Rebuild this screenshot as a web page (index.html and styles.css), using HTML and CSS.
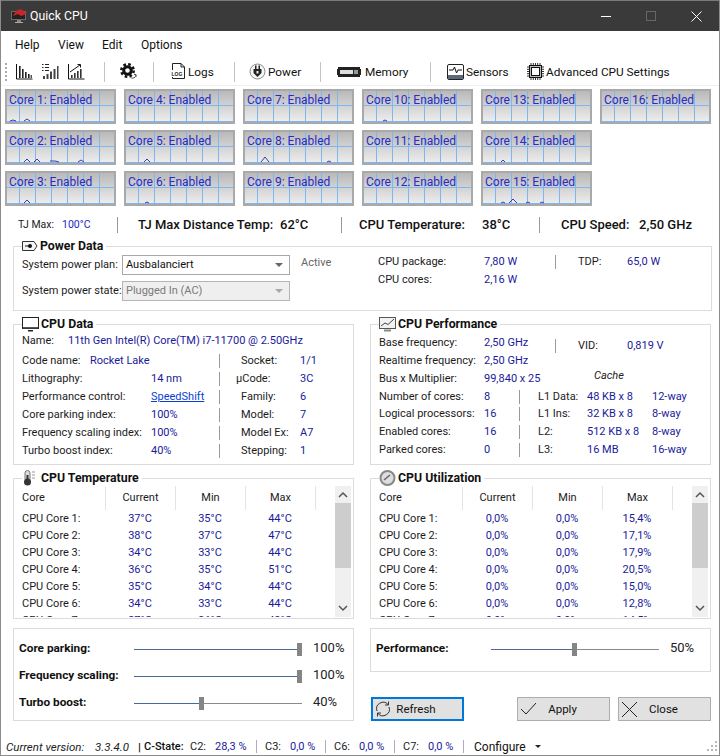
FILE: index.html
```html
<!DOCTYPE html>
<html lang="en">
<head>
<meta charset="utf-8">
<title>Quick CPU</title>
<link rel="stylesheet" href="styles.css">
</head>
<body>
<div class="window">
  <header class="titlebar">
    <svg class="logo" width="18" height="16" viewBox="0 0 18 16"><rect x="1.500" y="3.500" width="14" height="8" fill="#222" stroke="#6a6a6a"/><path d="M3 8 L6 3 L10 1 L14 3 L17 6 L11 8 L8 6 Z" fill="#c8242c"/><rect x="7" y="12" width="4" height="2" fill="#888"/><rect x="5" y="14" width="8" height="1" fill="#aaa"/></svg>
    <span class="app-name">Quick CPU</span>
    <span class="winbtns">
      <svg width="10" height="10" viewBox="0 0 10 10"><path d="M0 5.500H10" stroke="#fff"/></svg>
      <svg width="10" height="10" viewBox="0 0 10 10"><rect x=".5" y=".5" width="9" height="9" fill="none" stroke="#666"/></svg>
      <svg width="11" height="11" viewBox="0 0 11 11"><path d="M.5 .5L10.500 10.500M10.500 .5L.5 10.500" stroke="#fff"/></svg>
    </span>
  </header>

  <nav class="menu"><span>Help</span><span>View</span><span>Edit</span><span>Options</span></nav>

  <div class="toolbar">
    <span class="grip"></span>
    <svg class="ic i1" width="17" height="17" viewBox="0 0 17 17"><path d="M.5 1V16H16.500" fill="none" stroke="#111"/><path d="M3 3h1.600v12H3zM6 6h1.600v9H6zM9 9h1.600v6H9zM12 11h1.600v4H12z" fill="#222"/><path d="M14.500 12h1.500v3h-1.500z" fill="#555"/></svg>
    <svg class="ic i2" width="17" height="17" viewBox="0 0 17 17"><path d="M0 1.500h1.500M3 1.500h4M0 4.500h1.500M3 4.500h4M0 7.500h1.500M3 7.500h4" stroke="#222"/><path d="M1 13h2v3H1zM4.500 11h2v5h-2zM8 8.500h2V16H8zM11.500 6h2v10h-2zM15 3h1.500v13H15z" fill="#444"/></svg>
    <svg class="ic i3" width="17" height="17" viewBox="0 0 17 17"><path d="M.5 1V16H16.500" fill="none" stroke="#111"/><path d="M3 12h1.600v3H3zM6 10h1.600v5H6zM9 8h1.600v7H9zM12 6h1.600v9H12z" fill="#333"/><path d="M2 9L12 2M9.500 1.500h3v3" fill="none" stroke="#111"/></svg>
    <span class="tsep s1"></span>
    <svg class="ic i4" width="17" height="17" viewBox="0 0 17 17"><circle cx="7.500" cy="7.500" r="3.800" fill="none" stroke="#111" stroke-width="3"/><circle cx="7.500" cy="7.500" r="6.200" fill="none" stroke="#111" stroke-width="2.500" stroke-dasharray="2.600 2.260"/><path d="M10.500 14.500a3.500 3.500 0 0 0 5.500-2.500M16 14v-2.500h-2" fill="none" stroke="#555"/></svg>
    <span class="tsep s2"></span>
    <svg class="ic i5" width="17" height="17" viewBox="0 0 17 17"><path d="M2.500 7V.5H11L14.500 4V15.500H2.500V14" fill="none" stroke="#222"/><path d="M11 .5V4H14.500" fill="none" stroke="#222"/><text x="1.500" y="13" class="logtext">LOG</text></svg>
    <span class="tl t-logs">Logs</span>
    <span class="tsep s3"></span>
    <svg class="ic i6" width="17" height="17" viewBox="0 0 17 17"><circle cx="8.500" cy="8.500" r="7.500" fill="#f6f6f6" stroke="#888"/><path d="M6 2.500h1.500V6h2V2.500H11V6h1.500v4L8.500 14 4.500 10V6H6z" fill="#222"/><rect x="7.500" y="8" width="2" height="2.500" fill="#eee"/></svg>
    <span class="tl t-power">Power</span>
    <span class="tsep s4"></span>
    <svg class="ic i7" width="24" height="10" viewBox="0 0 24 10"><path d="M0 2h1V0h22v2h1v6h-1v2H1V8H0z" fill="#222"/><rect x="3" y="3" width="13" height="4" fill="#ddd"/><rect x="17" y="3" width="4" height="4" fill="#999"/></svg>
    <span class="tl t-mem">Memory</span>
    <span class="tsep s5"></span>
    <svg class="ic i8" width="17" height="16" viewBox="0 0 17 16"><rect x=".5" y=".5" width="16" height="15" rx="1.500" fill="#fff" stroke="#222"/><rect x="1" y="11" width="15" height="4" fill="#5a6a78"/><path d="M2 6H6L7.500 3 9.500 9 11 6H15" fill="none" stroke="#111"/></svg>
    <span class="tl t-sens">Sensors</span>
    <svg class="ic i9" width="17" height="17" viewBox="0 0 17 17"><rect x="2.500" y="2.500" width="12" height="12" fill="#bbb" stroke="#111"/><rect x="4.500" y="4.500" width="8" height="8" fill="#fff" stroke="#111"/><path d="M4 0v2M6.300 0v2M8.500 0v2M10.700 0v2M13 0v2M4 15v2M6.300 15v2M8.500 15v2M10.700 15v2M13 15v2M0 4h2M0 6.300h2M0 8.500h2M0 10.700h2M0 13h2M15 4h2M15 6.300h2M15 8.500h2M15 10.700h2M15 13h2" stroke="#333"/></svg>
    <span class="tl t-adv">Advanced CPU Settings</span>
  </div>

  <section class="cores">
    <div class="tile"><span>Core 1: Enabled</span><svg class="spark" viewBox="0 0 107 31"><path d="M3 30L6 29L9 30M17 30L20 28L23 30"/></svg></div>
    <div class="tile"><span>Core 2: Enabled</span><svg class="spark" viewBox="0 0 107 31"><path d="M17 30L20 27L23 30M27 30L30 27L33 30M43 29H48L52 30M71 30L74 28L77 30"/></svg></div>
    <div class="tile"><span>Core 3: Enabled</span><svg class="spark" viewBox="0 0 107 31"><path d="M17 30L20 27L23 30"/></svg></div>
    <div class="tile"><span>Core 4: Enabled</span><svg class="spark" viewBox="0 0 107 31"></svg></div>
    <div class="tile"><span>Core 5: Enabled</span><svg class="spark" viewBox="0 0 107 31"><path d="M18 30L21 27L24 30"/></svg></div>
    <div class="tile"><span>Core 6: Enabled</span><svg class="spark" viewBox="0 0 107 31"><path d="M19 30L21 29L23 30"/></svg></div>
    <div class="tile"><span>Core 7: Enabled</span><svg class="spark" viewBox="0 0 107 31"></svg></div>
    <div class="tile"><span>Core 8: Enabled</span><svg class="spark" viewBox="0 0 107 31"><path d="M16 30L20 25L24 30M82 30L84 29L86 30"/></svg></div>
    <div class="tile"><span>Core 9: Enabled</span><svg class="spark" viewBox="0 0 107 31"></svg></div>
    <div class="tile"><span>Core 10: Enabled</span><svg class="spark" viewBox="0 0 107 31"><path d="M19 30L21 29L23 30"/></svg></div>
    <div class="tile"><span>Core 11: Enabled</span><svg class="spark" viewBox="0 0 107 31"></svg></div>
    <div class="tile"><span>Core 12: Enabled</span><svg class="spark" viewBox="0 0 107 31"></svg></div>
    <div class="tile"><span>Core 13: Enabled</span><svg class="spark" viewBox="0 0 107 31"></svg></div>
    <div class="tile"><span>Core 14: Enabled</span><svg class="spark" viewBox="0 0 107 31"><path d="M18 30L20 28L22 30"/></svg></div>
    <div class="tile"><span>Core 15: Enabled</span><svg class="spark" viewBox="0 0 107 31"><path d="M18 30L20 29L22 30M26 30L30 26L34 30M43 30L45 29L47 30M57 30L59 29L61 30"/></svg></div>
    <div class="tile c16"><span>Core 16: Enabled</span><svg class="spark" viewBox="0 0 107 31"></svg></div>
  </section>

  <section class="summary">
    <span class="sm-l">TJ Max:</span><span class="sm-v">100°C</span><span class="bsep b1"></span>
    <b class="w1">TJ Max Distance Temp:</b><b class="w2">62°C</b><span class="bsep b2"></span>
    <b class="w3">CPU Temperature:</b><b class="w4">38°C</b><span class="bsep b3"></span>
    <b class="w5">CPU Speed:</b><b>2,50 GHz</b>
  </section>

  <section class="box power">
    <h2 class="legend"><svg width="16" height="12" viewBox="0 0 16 12"><path d="M.5 1.500H12L15 6 12 10.500H.5z" fill="#f4f4f4" stroke="#333"/><circle cx="8" cy="6" r="2" fill="#111"/><path d="M3 6h5" stroke="#111"/></svg>Power Data</h2>
    <div class="pw-left">
      <div class="pw-row"><span class="pw-lab">System power plan:</span><span class="select"><span>Ausbalanciert</span><i class="caret"></i></span><span class="active">Active</span></div>
      <div class="pw-row r2"><span class="pw-lab">System power state:</span><span class="select off"><span>Plugged In (AC)</span><i class="caret"></i></span></div>
    </div>
    <div class="pw-right">
      <div class="pw-data"><span class="lb">CPU package:</span><span class="val">7,80 W</span><span class="vsep"></span><span class="lb">TDP:</span><span class="val">65,0 W</span></div>
      <div class="pw-data"><span class="lb">CPU cores:</span><span class="val">2,16 W</span></div>
    </div>
  </section>

  <section class="two info">
    <div class="box cpu-data">
      <h2 class="legend"><svg width="17" height="15" viewBox="0 0 17 15"><rect x=".5" y=".5" width="16" height="11" fill="#fff" stroke="#222"/><rect x="1" y="10" width="15" height="1.500" fill="#555"/><path d="M6 13h5v1.500H6z" fill="#222"/></svg>CPU Data</h2>
      <div class="dl name-row"><span class="lb">Name:</span><span class="val">11th Gen Intel(R) Core(TM) i7-11700 @ 2.50GHz</span></div>
      <div class="dgrid">
        <div class="span2 code"><span class="lb">Code name:</span><span class="val">Rocket Lake</span></div><span class="vsep"></span><span class="lb">Socket:</span><span class="val">1/1</span>
        <span class="lb">Lithography:</span><span class="val">14 nm</span><span class="vsep"></span><span class="lb shift">µCode:</span><span class="val">3C</span>
        <span class="lb">Performance control:</span><a class="val link">SpeedShift</a><span class="vsep"></span><span class="lb">Family:</span><span class="val">6</span>
        <span class="lb">Core parking index:</span><span class="val">100%</span><span class="vsep"></span><span class="lb">Model:</span><span class="val">7</span>
        <span class="lb">Frequency scaling index:</span><span class="val">100%</span><span class="vsep"></span><span class="lb">Model Ex:</span><span class="val">A7</span>
        <span class="lb">Turbo boost index:</span><span class="val">40%</span><span class="vsep"></span><span class="lb">Stepping:</span><span class="val">1</span>
      </div>
    </div>
    <div class="box cpu-perf">
      <h2 class="legend"><svg width="17" height="15" viewBox="0 0 17 15"><rect x=".5" y=".5" width="16" height="11" fill="#f2f2f2" stroke="#555"/><path d="M2 9L6 6 9 7.500 15 2" fill="none" stroke="#444"/><path d="M5 12.500h7v2H5z" fill="#888"/></svg>CPU Performance</h2>
      <div class="pf-top">
        <div class="pf-left">
          <div class="pf-line"><span class="lb">Base frequency:</span><span class="val">2,50 GHz</span></div>
          <div class="pf-line"><span class="lb">Realtime frequency:</span><span class="val">2,50 GHz</span></div>
          <div class="pf-line"><span class="lb">Bus x Multiplier:</span><span class="val">99,840 x 25</span></div>
        </div>
        <div class="pf-right">
          <div class="pw-data vid"><span class="vsep"></span><span class="lb">VID:</span><span class="val">0,819 V</span></div>
          <em class="cache">Cache</em>
        </div>
      </div>
      <div class="cgrid">
        <span class="lb">Number of cores:</span><span class="val">8</span><span class="vsep"></span><span class="lb">L1 Data:</span><span class="val">48 KB x 8</span><span class="val">12-way</span>
        <span class="lb">Logical processors:</span><span class="val">16</span><span class="vsep"></span><span class="lb">L1 Ins:</span><span class="val">32 KB x 8</span><span class="val">8-way</span>
        <span class="lb">Enabled cores:</span><span class="val">16</span><span class="vsep"></span><span class="lb">L2:</span><span class="val">512 KB x 8</span><span class="val">8-way</span>
        <span class="lb">Parked cores:</span><span class="val">0</span><span class="vsep"></span><span class="lb">L3:</span><span class="val">16 MB</span><span class="val">16-way</span>
      </div>
    </div>
  </section>

  <section class="two lists">
    <div class="box listbox">
      <h2 class="legend"><svg width="17" height="16" viewBox="0 0 17 16"><rect x="3" y="0.500" width="5" height="11" rx="2.500" fill="#ddd" stroke="#777"/><circle cx="5.500" cy="12" r="3.500" fill="#333"/><rect x="4.500" y="5" width="2" height="6" fill="#333"/><path d="M10 2h3M10 5h3M10 8h3" stroke="#999"/></svg>CPU Temperature</h2>
      <div class="list">
        <div class="table">
          <div class="thead"><span>Core</span><span>Current</span><span>Min</span><span>Max</span><span></span></div>
          <div class="tr"><span class="lb">CPU Core 1:</span><span>37°C</span><span>35°C</span><span>44°C</span></div>
          <div class="tr"><span class="lb">CPU Core 2:</span><span>38°C</span><span>37°C</span><span>47°C</span></div>
          <div class="tr"><span class="lb">CPU Core 3:</span><span>34°C</span><span>33°C</span><span>44°C</span></div>
          <div class="tr"><span class="lb">CPU Core 4:</span><span>36°C</span><span>35°C</span><span>51°C</span></div>
          <div class="tr"><span class="lb">CPU Core 5:</span><span>35°C</span><span>34°C</span><span>44°C</span></div>
          <div class="tr"><span class="lb">CPU Core 6:</span><span>34°C</span><span>33°C</span><span>44°C</span></div>
          <div class="tr"><span class="lb">CPU Core 7:</span><span>37°C</span><span>36°C</span><span>48°C</span></div>
        </div>
        <div class="scroll"><svg width="16" height="17" viewBox="0 0 16 17"><path d="M4 11L8 7 12 11" fill="none" stroke="#555" stroke-width="1.500"/></svg><i class="thumb"></i><svg class="down" width="16" height="17" viewBox="0 0 16 17"><path d="M4 6L8 10 12 6" fill="none" stroke="#555" stroke-width="1.500"/></svg></div>
      </div>
    </div>
    <div class="box listbox">
      <h2 class="legend"><svg width="17" height="16" viewBox="0 0 17 16"><circle cx="8.500" cy="8" r="7" fill="#ddd" stroke="#888" stroke-width="2"/><path d="M5 10L11 5" stroke="#666" stroke-width="1.500"/></svg>CPU Utilization</h2>
      <div class="list">
        <div class="table">
          <div class="thead"><span>Core</span><span>Current</span><span>Min</span><span>Max</span><span></span></div>
          <div class="tr"><span class="lb">CPU Core 1:</span><span>0,0%</span><span>0,0%</span><span>15,4%</span></div>
          <div class="tr"><span class="lb">CPU Core 2:</span><span>0,0%</span><span>0,0%</span><span>17,1%</span></div>
          <div class="tr"><span class="lb">CPU Core 3:</span><span>0,0%</span><span>0,0%</span><span>17,9%</span></div>
          <div class="tr"><span class="lb">CPU Core 4:</span><span>0,0%</span><span>0,0%</span><span>20,5%</span></div>
          <div class="tr"><span class="lb">CPU Core 5:</span><span>0,0%</span><span>0,0%</span><span>15,0%</span></div>
          <div class="tr"><span class="lb">CPU Core 6:</span><span>0,0%</span><span>0,0%</span><span>12,8%</span></div>
          <div class="tr"><span class="lb">CPU Core 7:</span><span>0,0%</span><span>0,0%</span><span>14,5%</span></div>
        </div>
        <div class="scroll"><svg width="16" height="17" viewBox="0 0 16 17"><path d="M4 11L8 7 12 11" fill="none" stroke="#555" stroke-width="1.500"/></svg><i class="thumb"></i><svg class="down" width="16" height="17" viewBox="0 0 16 17"><path d="M4 6L8 10 12 6" fill="none" stroke="#555" stroke-width="1.500"/></svg></div>
      </div>
    </div>
  </section>

  <section class="two controls">
    <div class="box sliders">
      <div class="sl"><b>Core parking:</b><span class="track"><i class="fill" style="width:163px"></i><i class="knob"></i><i class="rest"></i></span><span class="pct">100%</span></div>
      <div class="sl"><b>Frequency scaling:</b><span class="track"><i class="fill" style="width:163px"></i><i class="knob"></i><i class="rest"></i></span><span class="pct">100%</span></div>
      <div class="sl"><b>Turbo boost:</b><span class="track"><i class="fill" style="width:65px"></i><i class="knob"></i><i class="rest"></i></span><span class="pct">40%</span></div>
    </div>
    <div class="right-controls">
      <div class="box perf-box">
        <div class="sl"><b>Performance:</b><span class="track"><i class="fill" style="width:81px"></i><i class="knob"></i><i class="rest"></i></span><span class="pct">50%</span></div>
      </div>
      <div class="buttons">
        <button class="btn focus"><svg width="16" height="16" viewBox="0 0 16 16"><path d="M2 10A6.500 6.500 0 0 1 13 3.500M14 6A6.500 6.500 0 0 1 3 12.500" fill="none" stroke="#333"/><path d="M13.500 .5V4H10M2.500 15.500V12H6" fill="none" stroke="#333"/></svg><span>Refresh</span></button>
        <button class="btn apply"><svg width="17" height="14" viewBox="0 0 17 14"><path d="M1 7L6 12 16 1" fill="none" stroke="#222"/></svg><span>Apply</span></button>
        <button class="btn close"><svg width="17" height="17" viewBox="0 0 17 17"><path d="M1 1L16 16M16 1L1 16" fill="none" stroke="#222"/></svg><span>Close</span></button>
      </div>
    </div>
  </section>

  <footer class="status">
    <em class="st-a">Current version:</em><em class="st-b">3.3.4.0</em><b class="st-c">|</b><b class="st-d">C-State:</b>
    <span class="st-l">C2:</span><span class="st-v wide">28,3 %</span><i class="st-s"></i>
    <span class="st-l">C3:</span><span class="st-v">0,0 %</span><i class="st-s"></i>
    <span class="st-l">C6:</span><span class="st-v">0,0 %</span><i class="st-s"></i>
    <span class="st-l">C7:</span><span class="st-v">0,0 %</span><i class="st-s"></i>
    <span class="st-cfg">Configure</span><i class="st-caret"></i>
    <svg class="rgrip" width="11" height="11" viewBox="0 0 11 11"><path d="M8 0h2v2H8zM4 4h2v2H4zM8 4h2v2H8zM0 8h2v2H0zM4 8h2v2H4zM8 8h2v2H8z" fill="#b8b8b8"/></svg>
  </footer>
</div>
</body>
</html>
```
FILE: styles.css
```css
* { box-sizing: border-box; }
html, body { margin: 0; padding: 0; background: #fff; }
body { font: 11px/16px Roboto, "Liberation Sans", sans-serif; color: #111; overflow: hidden; }
.window { width: 720px; height: 756px; border: 1px solid #8c8c8c; border-top: 0; overflow: hidden; background: #fff; }
i { display: block; font-style: normal; }
svg { display: block; flex: none; }

.titlebar { height: 31px; background: #3a3a3a; border-top: 1px solid #7a7a7a; color: #fff; display: flex; align-items: center; padding-left: 9px; font-size: 12.300px; }
.app-name { margin-left: 2px; }
.winbtns { margin-left: auto; display: flex; align-items: center; gap: 35px; padding-right: 17px; }

.menu { height: 27px; display: flex; align-items: center; padding-left: 14px; font-size: 12px; }
.menu span:nth-child(1) { width: 43px; }
.menu span:nth-child(2) { width: 44px; }
.menu span:nth-child(3) { width: 39px; }

.toolbar { height: 28px; display: flex; align-items: center; border-bottom: 1px solid #f0f0f0; font-size: 11.800px; }
.grip { width: 2px; height: 18px; margin-left: 4px; background: repeating-linear-gradient(#aaa 0 2px, transparent 2px 4px); }
.i1, .i2, .i3 { margin-left: 9px; }
.tsep { width: 1px; height: 20px; background: #c4c4c4; }
.s1 { margin-left: 19px; }
.i4 { margin-left: 15px; }
.s2 { margin-left: 16px; }
.i5 { margin-left: 16px; }
.logtext { font: bold 5px "Liberation Sans", sans-serif; fill: #222; }
.t-logs { margin-left: 1px; width: 46px; }
.i6 { margin-left: 14px; }
.t-power { margin-left: 2px; width: 52px; }
.i7 { margin-left: 16px; }
.t-mem { margin-left: 4px; width: 65px; }
.i8 { margin-left: 16px; }
.t-sens { margin-left: 2px; width: 61px; }
.t-adv { margin-left: 2px; }

.cores { display: grid; grid-template-rows: repeat(3, 35px); grid-auto-flow: column; grid-auto-columns: 111px; column-gap: 8px; row-gap: 6px; margin: 3px 0 0 4px; font-size: 12px; }
.tile { position: relative; border: 2px solid #a9a9a9; color: #2a2ac4; padding: 1px 0 0 2px; line-height: 16px;
  background:
    linear-gradient(90deg, #7db6f0 1px, transparent 1px) 12px 0 / 16px 100%,
    linear-gradient(#7db6f0 1px, transparent 1px) 0 14px / 100% 16px,
    linear-gradient(#b9b9b9, #eeeeee);
  background-clip: padding-box; }
.spark { position: absolute; left: 0; top: 0; width: 107px; height: 31px; }
.spark path { fill: none; stroke: #3a3ab8; stroke-width: 1; }
.c16 { grid-row: 1; }

.summary { display: flex; align-items: center; height: 16px; margin-top: 11px; padding-left: 17px; }
.summary b { font-weight: 500; font-size: 13px; }
.sm-l { font-size: 10.500px; width: 44px; color: #222; }
.sm-v { font-size: 10.500px; width: 55px; color: #2424c8; }
.bsep { width: 1px; height: 16px; background: #999; }
.b1 { margin-right: 20px; }
.w1 { width: 142px; } .w2 { width: 61px; }
.b2 { margin-right: 17px; }
.w3 { width: 123px; } .w4 { width: 57px; }
.b3 { margin-right: 21px; }
.w5 { width: 78px; }

.box { border: 1px solid #dcdcdc; position: relative; background: #fff; }
.legend { position: absolute; left: 8px; top: -10px; margin: 0; height: 18px; padding-right: 3px; background: #fff; display: flex; align-items: center; gap: 2px; font-size: 12.300px; font-weight: 700; color: #111; }
.lb { color: #1c1c1c; white-space: nowrap; }
.val { color: #1a1a9a; white-space: nowrap; }
.vsep { width: 1px; height: 14px; background: #999; align-self: center; }

.power { margin: 13px 0 0 12px; width: 699px; height: 65px; display: flex; }
.pw-left { width: 364px; padding: 8px 0 0 8px; }
.pw-row { display: flex; align-items: center; height: 20px; }
.r2 { margin-top: 6px; }
.pw-lab { width: 100px; color: #1c1c1c; white-space: nowrap; }
.select { width: 168px; height: 20px; border: 1px solid #a8a8a8; display: flex; align-items: center; justify-content: space-between; padding: 0 6px 0 3px; background: #fff; }
.select.off { background: #efefef; color: #7a7a7a; border-color: #b4b4b4; }
.caret { width: 0; height: 0; border: 4px solid transparent; border-top-color: #666; border-bottom: 0; }
.select.off .caret { border-top-color: #a8a8a8; }
.active { margin: -4px 0 0 11px; color: #666; }
.pw-right { padding-top: 6px; }
.pw-data { display: flex; align-items: center; height: 18px; }
.pw-data .lb:first-child { width: 106px; }
.pw-data .val:nth-child(2) { width: 71px; }
.pw-data .vsep + .lb { margin-left: 22px; width: 49px; }

.two { display: grid; grid-template-columns: 341px 341px; column-gap: 16px; margin-left: 12px; }
.info { margin-top: 13px; }
.info .box { height: 141px; padding: 7px 0 0 8px; }
.info .cpu-perf { padding-top: 9px; }
.dl { display: flex; height: 18px; align-items: center; }
.name-row .lb { width: 46px; }
.dgrid { display: grid; grid-template-columns: 129px 68px 22px 59px 50px; grid-auto-rows: 18px; margin-top: 2px; align-items: center; }
.span2 { grid-column: span 2; display: flex; }
.code .lb { width: 68px; }
.shift { margin-left: -5px; }
.link { color: #0a3fd6; text-decoration: underline; }

.pf-top { display: flex; }
.pf-left { width: 176px; }
.pf-line { display: flex; height: 18px; align-items: center; }
.pf-line .lb { width: 105px; }
.pf-right { padding-top: 3px; }
.cache { display: block; margin: 14px 0 0 39px; height: 14px; color: #222; line-height: 14px; }
.cgrid { display: grid; grid-template-columns: 105px 35px 19px 49px 65px 50px; grid-template-rows: 17px 18px 18px 17px; align-items: center; }

.lists { margin-top: 13px; }
.listbox { height: 141px; padding: 7px 0 0 8px; }
.list { display: flex; height: 131px; }
.table { width: 313px; overflow: hidden; }
.thead { display: grid; grid-template-columns: 83px 70px 70px 70px 20px; height: 24px; align-items: center; text-align: center; color: #1c1c1c; }
.thead span { height: 24px; line-height: 24px; border-left: 1px solid #e4e4e4; }
.thead span:first-child { border: 0; text-align: left; }
.tr { display: grid; grid-template-columns: 83px 70px 70px 70px; height: 17px; align-items: center; text-align: center; color: #1a1a9a; }
.tr .lb { text-align: left; }
.scroll { width: 16px; height: 131px; background: #f0f0f0; }
.thumb { width: 16px; height: 65px; background: #cdcdcd; }
.down { margin-top: 32px; }

.controls { margin-top: 9px; }
.sliders { height: 93px; padding: 5px 0 0 5px; }
.sl { display: flex; align-items: center; height: 27px; }
.sl b { width: 115px; font-weight: 700; font-size: 11.800px; }
.track { width: 168px; height: 13px; display: flex; align-items: center; margin-top: 3px; }
.fill { height: 1px; background: #4a6898; }
.knob { width: 5px; height: 13px; background: #858585; flex: none; }
.rest { flex: 1; height: 1px; background: #8a8a8a; }
.pct { margin: 1px 0 0 11px; font-size: 13px; color: #222; }
.perf-box { height: 44px; padding: 5px 0 0 5px; }
.buttons { display: flex; margin: 25px 0 0 1px; }
.btn { width: 93px; height: 24px; background: #e1e1e1; border: 1px solid #adadad; display: flex; align-items: center; padding: 0 0 0 2px; font: 11.500px Roboto, "Liberation Sans", sans-serif; color: #111; }
.btn svg { margin-right: -19px; }
.btn span { flex: 1; text-align: center; padding-right: 2px; }
.focus { border: 2px solid #0078d7; }
.apply { margin-left: 53px; }
.close { margin-left: 8px; }

.status { display: flex; align-items: center; height: 19px; margin-top: 16px; padding-left: 5px; font-size: 11.500px; }
.st-a { width: 89px; color: #222; } .st-b { width: 43px; color: #222; }
.st-c { width: 6px; font-weight: 700; } .st-d { width: 46px; font-weight: 500; font-size: 11px; }
.st-l { width: 25px; color: #222; font-size: 11px; }
.st-v { width: 35px; color: #1a1a9a; font-size: 11px; }
.st-v.wide { width: 41px; }
.st-s { width: 1px; height: 13px; background: #b9a6c4; margin-right: 8px; }
.st-cfg { margin-left: 2px; width: 61px; font-size: 12px; }
.st-caret { width: 0; height: 0; border: 3px solid transparent; border-top-color: #222; border-bottom: 0; }
.rgrip { margin-left: auto; margin-right: 1px; }
```
